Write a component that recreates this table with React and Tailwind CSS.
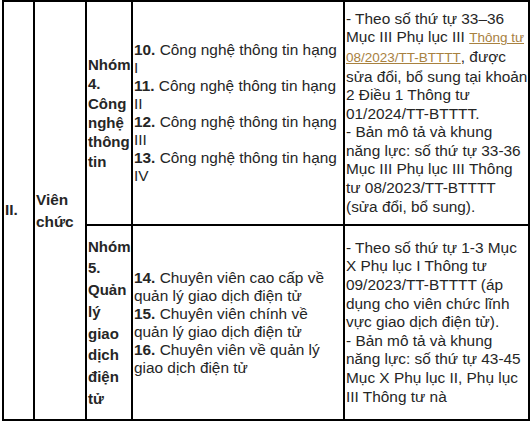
import React from "react";

const groups = [
  {
    name: "Nhóm 4. Công nghệ thông tin",
    items: [
      ["10.", "Công nghệ thông tin hạng I"],
      ["11.", "Công nghệ thông tin hạng II"],
      ["12.", "Công nghệ thông tin hạng III"],
      ["13.", "Công nghệ thông tin hạng IV"],
    ],
    h: "h-[224px]",
  },
  {
    name: "Nhóm 5. Quản lý giao dịch điện tử",
    items: [
      ["14.", "Chuyên viên cao cấp về quản lý giao dịch điện tử"],
      ["15.", "Chuyên viên chính về quản lý giao dịch điện tử"],
      ["16.", "Chuyên viên về quản lý giao dịch điện tử"],
    ],
    h: "h-[195px]",
  },
];

const cell = "border-r-2 border-b-2 border-black align-middle pl-[1px] py-0";

const App = () => {
  return (
    <div className="w-[530px] h-[424px] bg-white overflow-hidden font-['Liberation_Sans',Arial,sans-serif] text-[15.4px] leading-[18.6px] text-[#262626]">
      <table className="ml-[2px] table-fixed border-separate border-spacing-0 border-l-2 border-t-2 border-black w-[528px]">
        <colgroup>
          <col className="w-[31px]" />
          <col className="w-[52px]" />
          <col className="w-[46px]" />
          <col className="w-[212px]" />
          <col className="w-[185px]" />
        </colgroup>
        <tbody>
          <tr className={groups[0].h}>
            <td rowSpan={2} className={`${cell} pr-[3px] font-bold`}>II.</td>
            <td rowSpan={2} className={`${cell} pr-[3px] font-bold leading-[22px]`}>Viên chức</td>
            <td className={`${cell} pr-0 font-bold text-[15px] leading-[19.4px]`}>{groups[0].name}</td>
            <td className={`${cell} pr-[3px]`}>
              {groups[0].items.map(([n, t]) => (
                <div key={n} className="leading-[18px]">
                  <b>{n}</b> {t}
                </div>
              ))}
            </td>
            <td className={`${cell} pr-0`}>
              <div>
                - Theo số thứ tự 33–36 Mục III Phụ lục III{" "}
                <a href="#" className="text-[#a8813f] underline text-[13.5px]">
                  Thông tư 08/2023/TT-BTTTT
                </a>
                , được sửa đổi, bổ sung tại khoản 2 Điều 1 Thông tư 01/2024/TT-BTTTT.
              </div>
              <div>
                - Bản mô tả và khung năng lực: số thứ tự 33-36 Mục III Phụ lục III Thông tư 08/2023/TT-BTTTT (sửa đổi, bổ sung).
              </div>
            </td>
          </tr>
          <tr className={groups[1].h}>
            <td className={`${cell} pr-0 font-bold text-[15px] leading-[21.7px]`}>{groups[1].name}</td>
            <td className={`${cell} pr-[3px]`}>
              {groups[1].items.map(([n, t]) => (
                <div key={n} className="leading-[18px]">
                  <b>{n}</b> {t}
                </div>
              ))}
            </td>
            <td className={`${cell} pr-0`}>
              <div>
                - Theo số thứ tự 1-3 Mục X Phụ lục I Thông tư 09/2023/TT-BTTTT (áp dụng cho viên chức lĩnh vực giao dịch điện tử).
              </div>
              <div>
                - Bản mô tả và khung năng lực: số thứ tự 43-45 Mục X Phụ lục II, Phụ lục III Thông tư nà
              </div>
            </td>
          </tr>
        </tbody>
      </table>
    </div>
  );
};

export default App;
